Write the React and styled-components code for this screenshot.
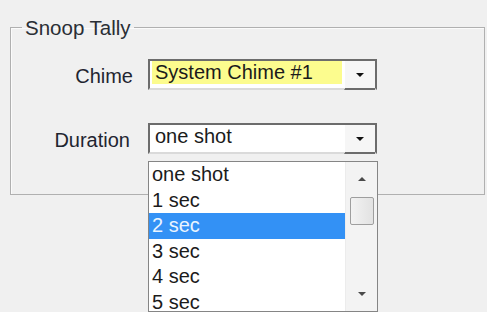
import React from 'react';
import styled, { createGlobalStyle } from 'styled-components';

const GlobalStyle = createGlobalStyle`
  html, body {
    margin: 0;
    padding: 0;
    background: #f0f0f0;
  }

  body {
    font-family: 'Liberation Sans', Arial, sans-serif;
    overflow: hidden;
  }
`;

const Page = styled.div`
  width: 487px;
  height: 312px;
  padding: 16px 2px 0 10px;
  box-sizing: border-box;
`;

const GroupBox = styled.fieldset`
  margin: 0;
  padding: 20px 0 40px 0;
  border: 1px solid #b0b0b0;
  box-shadow: inset 1px 1px 0 #fbfbfb;
  min-width: 0;
`;

const Legend = styled.legend`
  margin-left: 11px;
  padding: 0 3px;
  font-size: 20.5px;
  line-height: 23px;
  color: #2a2e35;
`;

const Form = styled.div`
  display: grid;
  grid-template-columns: 122px 229px;
  column-gap: 15px;
  row-gap: 33px;
  align-items: center;
`;

const FieldLabel = styled.label`
  justify-self: end;
  font-size: 20px;
  line-height: 23px;
  color: #1f2530;
  margin-top: ${(props) => props.$drop || 0}px;
  margin-right: ${(props) => props.$inset || 0}px;
`;

const ComboWrap = styled.div`
  position: relative;
`;

const Combo = styled.div`
  display: flex;
  height: 31px;
  box-sizing: border-box;
  border: 2px solid #6c6c6c;
  border-bottom-color: #dadada;
  background: #ffffff;
`;

const ValueArea = styled.div`
  flex: 1;
  padding: 0 2px 4px 2px;
`;

const Value = styled.div`
  height: 23px;
  line-height: 23px;
  padding-left: 3px;
  font-size: 20px;
  color: #1b1b1b;
  background: ${(props) => (props.$highlight ? '#fcfc8e' : '#ffffff')};
`;

const DropButton = styled.div`
  display: flex;
  align-items: center;
  justify-content: center;
  width: 30px;
  margin-bottom: -2px;
  background: #f6f6f6;
  border-left: 1px solid #ffffff;
  border-bottom: 2px solid #6c6c6c;
`;

const Arrow = styled.span`
  width: 0;
  height: 0;
  border-left: ${(props) => props.$size}px solid transparent;
  border-right: ${(props) => props.$size}px solid transparent;
  border-top: ${(props) => (props.$dir === 'down' ? `${props.$size}px solid ${props.$color}` : 'none')};
  border-bottom: ${(props) => (props.$dir === 'up' ? `${props.$size}px solid ${props.$color}` : 'none')};
`;

const DropList = styled.div`
  position: absolute;
  top: calc(100% + 7px);
  left: 0;
  display: flex;
  width: 230px;
  height: 151px;
  box-sizing: border-box;
  border: 1px solid #858585;
  background: #ffffff;
  overflow: hidden;
`;

const Items = styled.ul`
  flex: 1;
  margin: 0;
  padding: 0;
  list-style: none;
`;

const Item = styled.li`
  height: 25.5px;
  line-height: 25.5px;
  padding-left: 3px;
  font-size: 20px;
  color: ${(props) => (props.$selected ? '#eaf4ff' : '#1b1b1b')};
  background: ${(props) => (props.$selected ? '#3391f5' : 'transparent')};
`;

const ScrollBar = styled.div`
  display: flex;
  flex-direction: column;
  width: 31px;
  background: #f3f3f3;
  border-left: 1px solid #ececec;
`;

const ScrollButton = styled.div`
  display: flex;
  align-items: center;
  justify-content: center;
  height: 34px;
  flex-shrink: 0;
`;

const Track = styled.div`
  flex: 1;
  padding: 1px 3px 0 4px;
`;

const Thumb = styled.div`
  height: 26px;
  border: 1px solid #9e9e9e;
  border-radius: 2px;
  background: linear-gradient(to right, #f2f2f2, #e2e2e2);
`;

const durations = ['one shot', '1 sec', '2 sec', '3 sec', '4 sec', '5 sec'];

function ComboBox({ value, highlight, children }) {
  return (
    <ComboWrap>
      <Combo>
        <ValueArea>
          <Value $highlight={highlight}>{value}</Value>
        </ValueArea>
        <DropButton>
          <Arrow $dir="down" $size={4.5} $color="#111111" />
        </DropButton>
      </Combo>
      {children}
    </ComboWrap>
  );
}

export default function App() {
  return (
    <Page>
      <GlobalStyle />
      <GroupBox>
        <Legend>Snoop Tally</Legend>
        <Form>
          <FieldLabel $drop={3}>Chime</FieldLabel>
          <ComboBox value="System Chime #1" highlight />

          <FieldLabel $drop={4} $inset={3}>Duration</FieldLabel>
          <ComboBox value="one shot">
            <DropList>
              <Items>
                {durations.map((d) => (
                  <Item key={d} $selected={d === '2 sec'}>{d}</Item>
                ))}
              </Items>
              <ScrollBar>
                <ScrollButton>
                  <Arrow $dir="up" $size={4} $color="#4a4a4a" />
                </ScrollButton>
                <Track>
                  <Thumb />
                </Track>
                <ScrollButton>
                  <Arrow $dir="down" $size={4} $color="#4a4a4a" />
                </ScrollButton>
              </ScrollBar>
            </DropList>
          </ComboBox>
        </Form>
      </GroupBox>
    </Page>
  );
}
